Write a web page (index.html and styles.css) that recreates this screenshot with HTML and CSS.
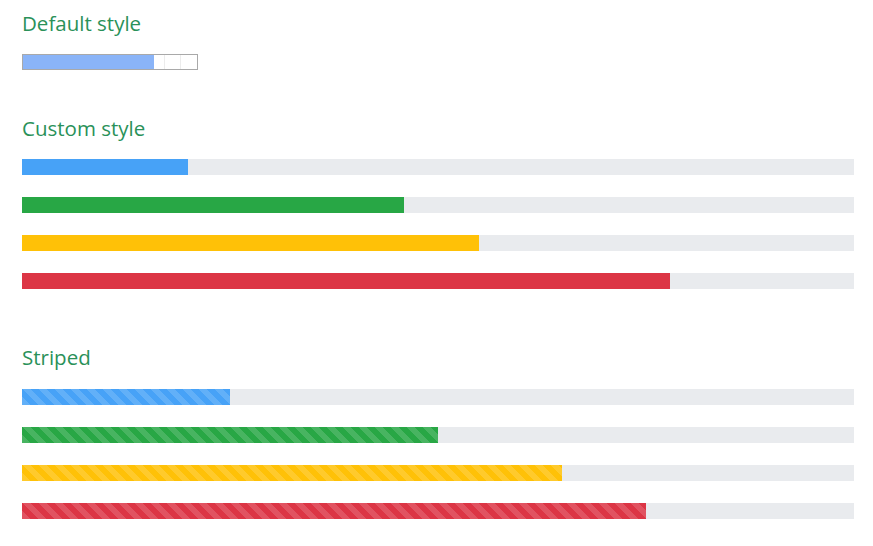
FILE: index.html
```html
<!DOCTYPE html>
<html>
<head>
<meta charset="utf-8">
<link rel="stylesheet" href="styles.css">
</head>
<body>
<main class="page">
  <section class="sec sec-default">
    <h2 class="title">Default style</h2>
    <div class="native"><div class="native-fill" style="width:75%"></div><div class="native-rest"></div></div>
  </section>
  <section class="sec sec-custom">
    <h2 class="title">Custom style</h2>
    <div class="bars">
      <div class="track"><div class="fill blue" style="width:20%"></div></div>
      <div class="track"><div class="fill green" style="width:45.9%"></div></div>
      <div class="track"><div class="fill yellow" style="width:54.9%"></div></div>
      <div class="track"><div class="fill red" style="width:77.9%"></div></div>
    </div>
  </section>
  <section class="sec sec-striped">
    <h2 class="title">Striped</h2>
    <div class="bars">
      <div class="track"><div class="fill blue striped" style="width:25%"></div></div>
      <div class="track"><div class="fill green striped" style="width:50%"></div></div>
      <div class="track"><div class="fill yellow striped" style="width:64.9%"></div></div>
      <div class="track"><div class="fill red striped" style="width:75%"></div></div>
    </div>
  </section>
</main>
</body>
</html>
```
FILE: styles.css
```css
html, body { margin: 0; padding: 0; background: #fff; }
body { font-family: "Open Sans", "Noto Sans", sans-serif; }
.page { padding: 9px 19px 0 22px; }
.title {
  margin: 0;
  font-size: 20.5px;
  line-height: 28px;
  font-weight: 400;
  color: #2a9159;
}
.sec-default .title { margin-bottom: 17px; }
.sec-custom { margin-top: 44px; }
.sec-custom .title { margin-bottom: 17px; }
.sec-striped { margin-top: 54px; }
.sec-striped .title { margin-bottom: 18px; }

.native {
  width: 176px;
  height: 16px;
  box-sizing: border-box;
  border: 1px solid #a9a9a9;
  display: flex;
  background: #fff;
}
.native-fill { background: #8ab4f8; height: 100%; }
.native-rest {
  flex: 1;
  background-image: linear-gradient(90deg, transparent 10px, #ececec 10px, #ececec 11px, transparent 11px, transparent 26px, #ececec 26px, #ececec 27px, transparent 27px);
}

.bars { display: flex; flex-direction: column; gap: 22px; }
.track {
  height: 16px;
  background: #e9ebee;
  display: flex;
}
.fill { height: 100%; }
.blue { background-color: #47a2f7; }
.green { background-color: #28a745; }
.yellow { background-color: #ffc107; }
.red { background-color: #dc3545; }
.striped {
  background-image: linear-gradient(45deg, rgba(255,255,255,.15) 25%, transparent 25%, transparent 50%, rgba(255,255,255,.15) 50%, rgba(255,255,255,.15) 75%, transparent 75%, transparent);
  background-size: 16px 16px;
}
```
